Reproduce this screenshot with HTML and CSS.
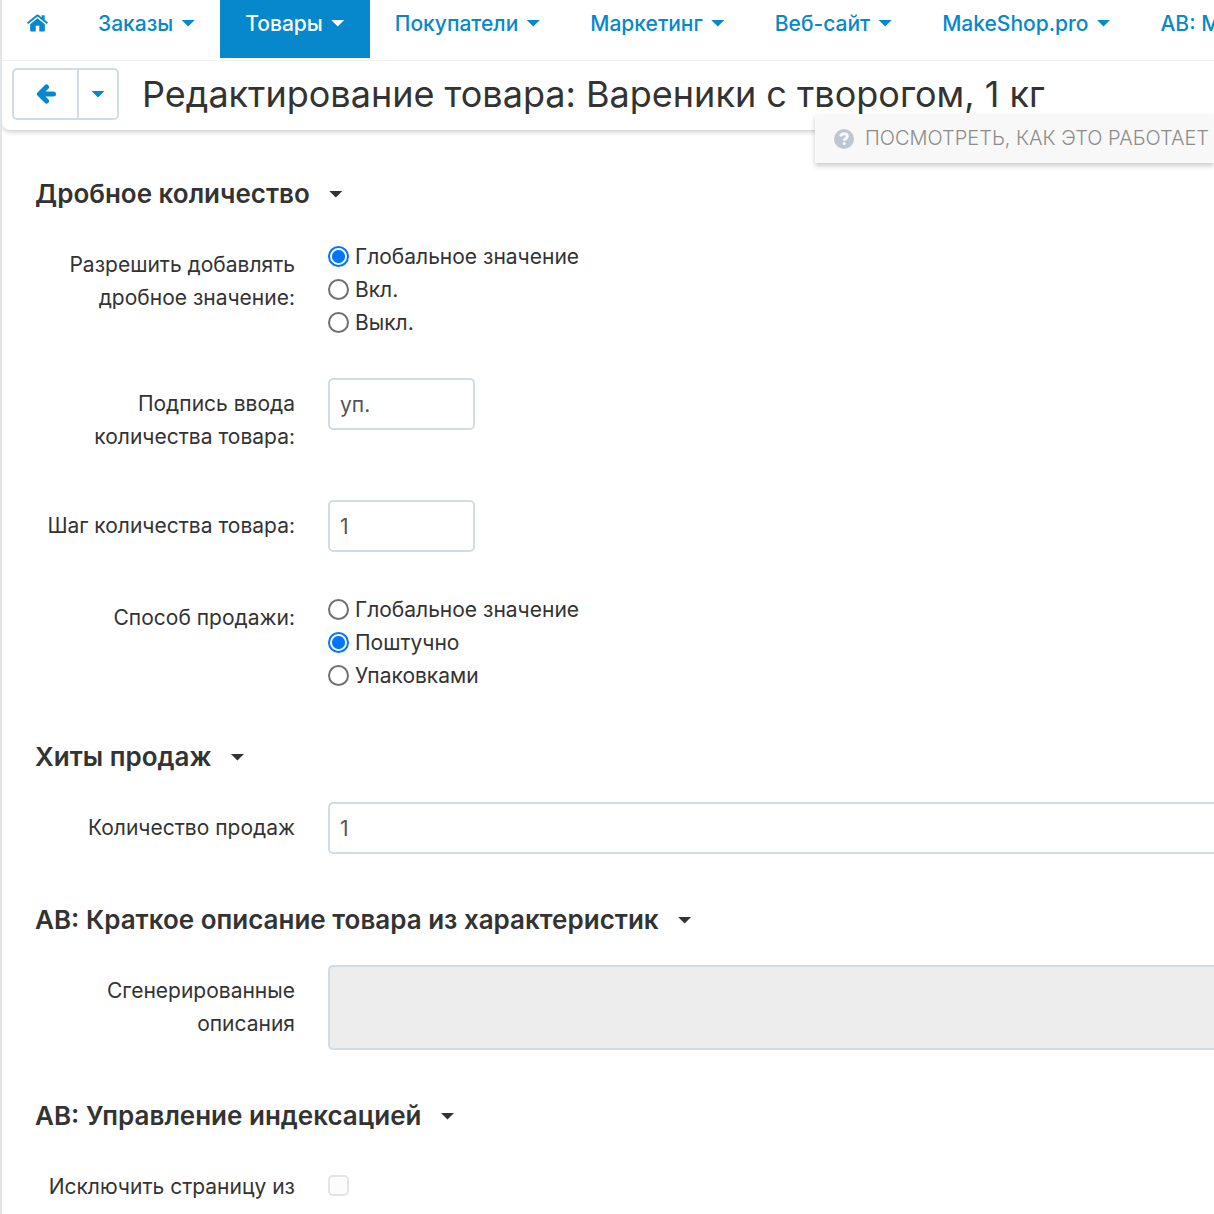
FILE: index.html
```html
<!DOCTYPE html>
<html lang="ru">
<head>
<meta charset="utf-8">
<meta name="viewport" content="width=device-width, initial-scale=1">
<title>Редактирование товара</title>
<link rel="stylesheet" href="styles.css">
</head>
<body>
<header class="top">
  <nav class="menu">
    <a class="menu-item" href="#" aria-label="Главная">
      <svg class="home" viewBox="0 0 20 17" aria-hidden="true"><path d="M10 3.9 17 9.7V15.6a1 1 0 0 1-1 1h-4.300V11.200H8.300V16.600H4a1 1 0 0 1-1-1V9.700z"/><path d="M10 .3a1.300 1.300 0 0 1 .9.300L14 3.200V1h2.800v4.500l2.900 2.400a.4.400 0 0 1 0 .6l-.7.800a.4.400 0 0 1-.5 0L10 2.300 1.500 9.300a.4.400 0 0 1-.5 0l-.7-.8a.4.400 0 0 1 0-.6L9.100.6A1.300 1.300 0 0 1 10 .3z"/></svg>
    </a>
    <a class="menu-item" href="#">Заказы<span class="caret"></span></a>
    <a class="menu-item active" href="#">Товары<span class="caret"></span></a>
    <a class="menu-item" href="#">Покупатели<span class="caret"></span></a>
    <a class="menu-item" href="#">Маркетинг<span class="caret"></span></a>
    <a class="menu-item" href="#">Веб-сайт<span class="caret"></span></a>
    <a class="menu-item" href="#">MakeShop.pro<span class="caret"></span></a>
    <a class="menu-item" href="#">АВ: М</a>
  </nav>
  <div class="title-bar">
    <div class="back-group">
      <button class="back" type="button" aria-label="Назад">
        <svg class="arrow" viewBox="0 0 20 20" aria-hidden="true"><path d="M10.500 3 3.500 10l7 7M4 10h13.500"/></svg>
      </button>
      <button class="back-menu" type="button" aria-label="Ещё"><span class="caret"></span></button>
    </div>
    <h1 class="title">Редактирование товара: Вареники с творогом, 1 кг</h1>
    <a class="help" href="#">
      <svg class="help-icon" viewBox="0 0 20 20" aria-hidden="true"><circle cx="10" cy="10" r="10"/><path class="mark" d="M6.600 7.500C7 5.600 8.200 4.700 10 4.700c2 0 3.300 1.100 3.300 2.700 0 2.300-3 2.300-3 4.300"/><circle class="dot" cx="10.200" cy="14.600" r="1.500"/></svg>
      Посмотреть, как это работает
    </a>
  </div>
</header>
<main class="content">
  <form>
    <section class="section">
      <h2 class="heading">Дробное количество<span class="caret"></span></h2>
      <div class="rows">
        <div class="row" role="radiogroup" aria-labelledby="fraction">
          <span class="label" id="fraction">Разрешить добавлять дробное значение:</span>
          <div class="field options">
            <label class="option"><input type="radio" name="fraction" checked>Глобальное значение</label>
            <label class="option"><input type="radio" name="fraction">Вкл.</label>
            <label class="option"><input type="radio" name="fraction">Выкл.</label>
          </div>
        </div>
        <div class="row">
          <label class="label" for="unit">Подпись ввода количества товара:</label>
          <div class="field"><input class="text short" id="unit" type="text" value="уп."></div>
        </div>
        <div class="row">
          <label class="label" for="step">Шаг количества товара:</label>
          <div class="field"><input class="text short" id="step" type="text" value="1"></div>
        </div>
        <div class="row" role="radiogroup" aria-labelledby="mode">
          <span class="label" id="mode">Способ продажи:</span>
          <div class="field options">
            <label class="option"><input type="radio" name="mode">Глобальное значение</label>
            <label class="option"><input type="radio" name="mode" checked>Поштучно</label>
            <label class="option"><input type="radio" name="mode">Упаковками</label>
          </div>
        </div>
      </div>
    </section>
    <section class="section">
      <h2 class="heading">Хиты продаж<span class="caret"></span></h2>
      <div class="row">
        <label class="label" for="sales">Количество продаж</label>
        <div class="field"><input class="text wide" id="sales" type="text" value="1"></div>
      </div>
    </section>
    <section class="section">
      <h2 class="heading">АВ: Краткое описание товара из характеристик<span class="caret"></span></h2>
      <div class="row">
        <label class="label" for="generated">Сгенерированные описания</label>
        <div class="field"><textarea class="text wide area" id="generated" disabled></textarea></div>
      </div>
    </section>
    <section class="section">
      <h2 class="heading">АВ: Управление индексацией<span class="caret"></span></h2>
      <div class="row">
        <label class="label" for="noindex">Исключить страницу из</label>
        <div class="field"><input class="check" id="noindex" type="checkbox"></div>
      </div>
    </section>
  </form>
</main>
</body>
</html>
```
FILE: styles.css
```css
* {
  box-sizing: border-box;
}

body {
  margin: 0;
  min-height: 100vh;
  border-left: 2px solid #e2e5e7;
  background: #fff;
  color: #333;
  font: 21px/33px Inter, "Liberation Sans", sans-serif;
  overflow-x: hidden;
}

.top {
  border-radius: 0 0 0 8px;
  background: #fff;
  box-shadow: 0 2px 5px rgba(0, 0, 0, 0.2);
}

.menu {
  display: flex;
  height: 61px;
  border-bottom: 1px solid #f0f0f0;
  overflow: hidden;
}

.menu-item {
  display: flex;
  flex: none;
  align-items: center;
  gap: 8px;
  height: 58px;
  padding: 0 25px 12px;
  color: #0788cc;
  font-weight: 500;
  text-decoration: none;
}

.menu-item.active {
  background: #0788cc;
  color: #fff;
}

.home {
  width: 21px;
  height: 18px;
  fill: currentColor;
}

.caret {
  flex: none;
  width: 14px;
  height: 7px;
  background: currentColor;
  clip-path: polygon(0 0, 100% 0, 50% 100%);
}

.title-bar {
  position: relative;
  display: flex;
  align-items: center;
  gap: 23px;
  height: 69px;
  padding: 0 10px 3px;
}

.back-group {
  display: flex;
  flex: none;
  height: 52px;
  border: 2px solid #d3dce4;
  border-radius: 5px;
}

.back,
.back-menu {
  display: flex;
  align-items: center;
  justify-content: center;
  padding: 0;
  border: 0;
  background: none;
  color: #0788cc;
}

.back {
  width: 63px;
}

.back-menu {
  width: 40px;
  border-left: 2px solid #d3dce4;
}

.arrow {
  width: 20px;
  height: 20px;
  fill: none;
  stroke: currentColor;
  stroke-width: 5;
  stroke-linecap: round;
  stroke-linejoin: round;
}

.title {
  margin: 0;
  font-size: 36px;
  font-weight: 400;
  line-height: 48px;
  white-space: nowrap;
}

.help {
  position: absolute;
  top: 53px;
  right: 0;
  display: flex;
  align-items: center;
  gap: 11px;
  height: 49px;
  padding: 0 5px 0 19px;
  background: #f8f8f8;
  box-shadow: 0 3px 5px rgba(0, 0, 0, 0.2);
  color: #8c8c8c;
  font-size: 20px;
  font-weight: 300;
  text-decoration: none;
  text-transform: uppercase;
  white-space: nowrap;
}

.help-icon {
  width: 20px;
  height: 20px;
  fill: #bcc7d2;
}

.mark {
  fill: none;
  stroke: #f8f8f8;
  stroke-width: 3;
}

.dot {
  fill: #f8f8f8;
}

.content {
  padding: 46px 0 0 33px;
}

.section {
  margin-bottom: 48px;
}

.section:last-child {
  margin-bottom: 0;
}

.heading {
  display: flex;
  align-items: center;
  gap: 19px;
  margin: 0 0 27px;
  font-size: 26px;
  font-weight: 600;
  line-height: 36px;
}

.rows {
  display: grid;
  gap: 40px;
}

.row {
  display: grid;
  grid-template-columns: 260px 1fr;
  column-gap: 33px;
}

.label {
  padding-top: 9px;
  text-align: right;
}

.rows .label {
  padding-bottom: 7px;
}

.field {
  display: flex;
  flex-direction: column;
  align-items: flex-start;
}

.options {
  height: 99px;
  padding-top: 1px;
}

.option {
  display: flex;
  align-items: center;
  gap: 6px;
}

.option input {
  appearance: none;
  width: 21px;
  height: 21px;
  margin: 0;
  border: 2px solid #707070;
  border-radius: 50%;
  background: #fff;
}

.option input:checked {
  border-color: #0075ff;
  background: radial-gradient(circle, #0075ff 6px, #fff 7px);
}

.text {
  height: 52px;
  padding: 0 10px;
  border: 2px solid #d3dce4;
  border-radius: 5px;
  background: #fff;
  color: #555;
  font: inherit;
}

.short {
  width: 147px;
}

.wide {
  width: 100%;
  border-right: 0;
  border-radius: 5px 0 0 5px;
}

.area {
  display: block;
  height: 85px;
  background: #ededed;
  resize: none;
}

.check {
  appearance: none;
  width: 21px;
  height: 21px;
  margin: 14px 0 0;
  border: 2px solid #e4e4e4;
  border-radius: 5px;
  background: #fcfcfc;
}
```
